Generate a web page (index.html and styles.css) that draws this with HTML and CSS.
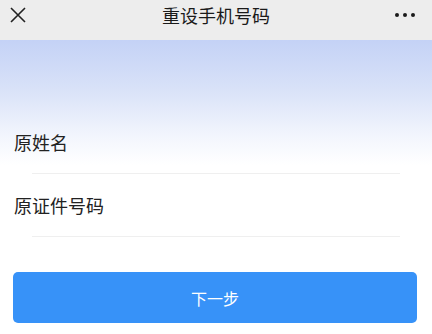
FILE: index.html
```html
<!DOCTYPE html>
<html lang="zh">
<head>
<meta charset="utf-8">
<link rel="stylesheet" href="styles.css">
</head>
<body>
<div class="header">
  <svg class="close" width="16" height="16" viewBox="0 0 16 16"><path d="M1 1 L15 15 M15 1 L1 15" stroke="#222" stroke-width="1.6" fill="none"/></svg>
  <div class="title">重设手机号码</div>
  <div class="more"><span></span><span></span><span></span></div>
</div>
<div class="main">
  <div class="form">
    <div class="row"><div class="label">原姓名</div><div class="line"></div></div>
    <div class="row"><div class="label">原证件号码</div><div class="line"></div></div>
  </div>
  <div class="btn">下一步</div>
</div>
</body>
</html>
```
FILE: styles.css
```css
html, body { margin: 0; padding: 0; background: #fff; }
body { font-family: "Noto Sans CJK SC", "Noto Sans", sans-serif; width: 432px; height: 334px; overflow: hidden; }
.header { height: 40px; background: #ededed; display: flex; align-items: center; justify-content: space-between; padding: 0 17px 0 10px; position: relative; }
.close { display: block; margin-top: -10px; }
.title { position: absolute; left: 0; right: 0; top: 4px; text-align: center; font-size: 18px; color: #1a1a1a; line-height: 22px; pointer-events: none; }
.more { display: flex; gap: 4px; margin-top: -11px; }
.more span { width: 4px; height: 4px; border-radius: 50%; background: #1a1a1a; display: block; }
.main { background: linear-gradient(180deg, #c4d2f6 0px, #d9e2f8 50px, #f2f5fd 95px, #ffffff 125px); padding-top: 71px; }
.row { height: 63px; display: flex; flex-direction: column; }
.label { flex: 1; display: flex; align-items: center; padding-left: 14px; font-size: 18px; color: #222; }
.line { height: 1px; background: #efefef; margin: 0 32px; }
.btn { margin: 35px 15px 0 13px; height: 51px; border-radius: 5px; background: #3792f8; color: #fff; font-size: 16px; display: flex; align-items: center; justify-content: center; }
```
